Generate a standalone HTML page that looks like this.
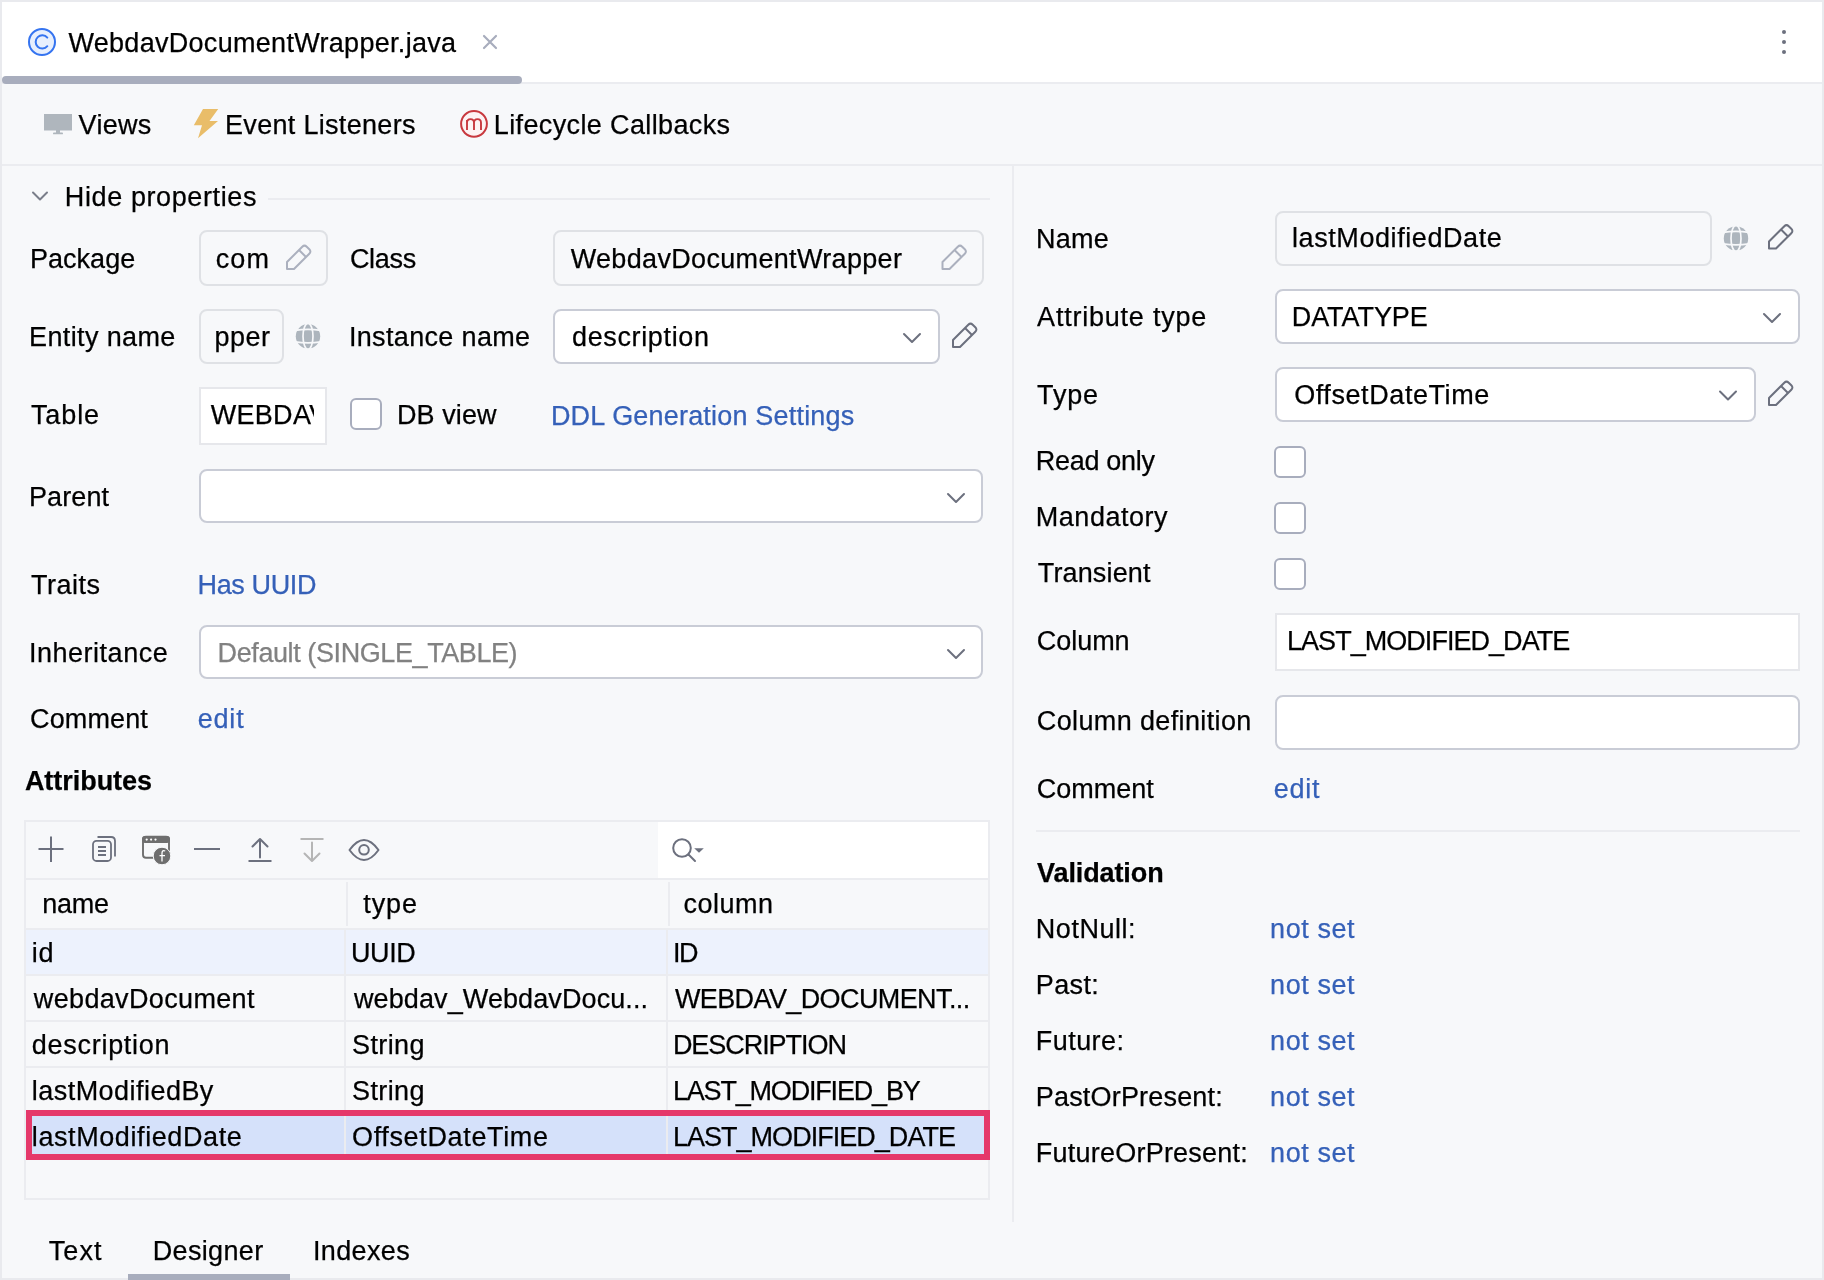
<!DOCTYPE html>
<html><head><meta charset="utf-8"><style>
html,body{margin:0;padding:0;}
body{width:1824px;height:1280px;position:relative;overflow:hidden;background:#f7f8fa;font-family:"Liberation Sans",sans-serif;font-size:27px;color:#000000;}
.r{position:absolute;box-sizing:border-box;}
.t{position:absolute;white-space:pre;line-height:30px;-webkit-text-stroke:0.25px currentColor;}
svg{position:absolute;left:0;top:0;}
</style></head><body>
<div class="r" style="left:0px;top:0px;width:1824px;height:2px;background:#e9eaee;"></div>
<div class="r" style="left:0px;top:0px;width:2px;height:1280px;background:#e9eaee;"></div>
<div class="r" style="left:1822px;top:0px;width:2px;height:1280px;background:#e9eaee;"></div>
<div class="r" style="left:0px;top:1278px;width:1824px;height:2px;background:#e9eaee;"></div>
<div class="r" style="left:2px;top:2px;width:1820px;height:80px;background:#ffffff;"></div>
<div class="r" style="left:2px;top:82px;width:1820px;height:2px;background:#ebecf0;"></div>
<div class="r" style="left:2px;top:76px;width:520px;height:8px;background:#a8adbd;border-radius:4px;"></div>
<div class="r" style="left:2px;top:164px;width:1820px;height:2px;background:#ebecf0;"></div>
<div class="r" style="left:1012px;top:166px;width:2px;height:1056px;background:#ebecf0;"></div>
<div class="r" style="left:268px;top:198px;width:722px;height:2px;background:#ebecf0;"></div>
<div class="r" style="left:198.5px;top:230px;width:129.0px;height:55.5px;border:2px solid #dfe1e5;border-radius:8px;"></div>
<div class="r" style="left:552.5px;top:230px;width:431.0px;height:55.5px;border:2px solid #dfe1e5;border-radius:8px;"></div>
<div class="r" style="left:198.5px;top:308.5px;width:85.0px;height:55.0px;border:2px solid #dfe1e5;border-radius:8px;"></div>
<div class="r" style="left:552.5px;top:308.5px;width:387.0px;height:55.0px;background:#fff;border:2px solid #c9ccd6;border-radius:8px;"></div>
<div class="r" style="left:198.5px;top:386.5px;width:128.5px;height:58.0px;background:#fff;border:2px solid #e6e7eb;"></div>
<div class="r" style="left:350px;top:398px;width:32px;height:32px;background:#fff;border:2px solid #a8adbd;border-radius:6px;"></div>
<div class="r" style="left:198.5px;top:468.5px;width:784.5px;height:54.0px;background:#fff;border:2px solid #c9ccd6;border-radius:8px;"></div>
<div class="r" style="left:198.5px;top:624.5px;width:784.5px;height:54.5px;background:#fff;border:2px solid #c9ccd6;border-radius:8px;"></div>
<div class="r" style="left:24px;top:820px;width:966px;height:380px;border:2px solid #ebecf0;"></div>
<div class="r" style="left:658px;top:822px;width:330px;height:56px;background:#fff;"></div>
<div class="r" style="left:26px;top:878px;width:962px;height:2px;background:#ebecf0;"></div>
<div class="r" style="left:26px;top:928px;width:962px;height:2px;background:#ebecf0;"></div>
<div class="r" style="left:346px;top:882px;width:2px;height:44px;background:#ebecf0;"></div>
<div class="r" style="left:668px;top:882px;width:2px;height:44px;background:#ebecf0;"></div>
<div class="r" style="left:26px;top:930px;width:962px;height:44px;background:#edf2fd;"></div>
<div class="r" style="left:26px;top:974px;width:962px;height:2px;background:#ebecf0;"></div>
<div class="r" style="left:26px;top:1020px;width:962px;height:2px;background:#ebecf0;"></div>
<div class="r" style="left:26px;top:1066px;width:962px;height:2px;background:#ebecf0;"></div>
<div class="r" style="left:26px;top:1112px;width:962px;height:2px;background:#ebecf0;"></div>
<div class="r" style="left:26px;top:1114px;width:962px;height:44px;background:#d5e1fa;"></div>
<div class="r" style="left:344px;top:930px;width:2px;height:228px;background:#ebecf0;"></div>
<div class="r" style="left:666px;top:930px;width:2px;height:228px;background:#ebecf0;"></div>
<div class="r" style="left:26px;top:1110px;width:964px;height:50px;border:6px solid #e5386a;"></div>
<div class="r" style="left:1274.5px;top:210.5px;width:437.0px;height:55.0px;border:2px solid #dfe1e5;border-radius:8px;"></div>
<div class="r" style="left:1274.5px;top:288.5px;width:525.0px;height:55.0px;background:#fff;border:2px solid #c9ccd6;border-radius:8px;"></div>
<div class="r" style="left:1274.5px;top:366.5px;width:481.0px;height:55.0px;background:#fff;border:2px solid #c9ccd6;border-radius:8px;"></div>
<div class="r" style="left:1274px;top:446px;width:32px;height:32px;background:#fff;border:2px solid #a8adbd;border-radius:6px;"></div>
<div class="r" style="left:1274px;top:502px;width:32px;height:32px;background:#fff;border:2px solid #a8adbd;border-radius:6px;"></div>
<div class="r" style="left:1274px;top:558px;width:32px;height:32px;background:#fff;border:2px solid #a8adbd;border-radius:6px;"></div>
<div class="r" style="left:1274.5px;top:612.5px;width:525.0px;height:58.5px;background:#fff;border:2px solid #e6e7eb;"></div>
<div class="r" style="left:1274.5px;top:694.5px;width:525.0px;height:55.0px;background:#fff;border:2px solid #c9ccd6;border-radius:8px;"></div>
<div class="r" style="left:1036px;top:830px;width:764px;height:2px;background:#ebecf0;"></div>
<div class="r" style="left:128px;top:1274px;width:162px;height:6px;background:#a8adbd;"></div>
<svg width="1824" height="1280" viewBox="0 0 1824 1280">
<circle cx="42" cy="42" r="13" fill="#e7effd" stroke="#3574f0" stroke-width="2"/>
<path d="M47.3,37.6 A6.6,6.6 0 1 0 47.3,46.2" fill="none" stroke="#3574f0" stroke-width="2" stroke-linecap="round"/>
<path d="M484,36 L496,48 M496,36 L484,48" stroke="#a8adbd" stroke-width="2.2" stroke-linecap="round"/>
<circle cx="1784" cy="32" r="2" fill="#6c707e"/>
<circle cx="1784" cy="42" r="2" fill="#6c707e"/>
<circle cx="1784" cy="52" r="2" fill="#6c707e"/>
<rect x="44" y="114" width="28" height="16.5" fill="#afb6bd"/><rect x="56" y="130" width="4" height="3" fill="#afb6bd"/><rect x="53" y="132.5" width="10" height="1.8" rx="0.9" fill="#afb6bd"/>
<polygon points="203,109 218.2,109 209.5,121 218,121 198,138.2 202,125.3 193.8,125.3" fill="#e9bd69"/>
<circle cx="474" cy="123.8" r="12.9" fill="#fdf3f4" stroke="#c8393f" stroke-width="2"/>
<path d="M467,130 V120 M467,122.8 Q467,119.1 470.5,119.1 Q474,119.1 474,122.8 V130 M474,122.8 Q474,119.1 477.5,119.1 Q481,119.1 481,122.8 V130" fill="none" stroke="#c8393f" stroke-width="1.9"/>
<polyline points="33,192.5 40.0,199.5 47,192.5" fill="none" stroke="#7a7e8a" stroke-width="2" stroke-linecap="round" stroke-linejoin="round"/>
<g transform="translate(284,242.5)" fill="none" stroke="#abb0be" stroke-width="2" stroke-linejoin="round"><path d="M3,19.5 L18.3,4.2 Q20.5,2 22.7,4.2 L25.3,6.8 Q27.5,9 25.3,11.2 L10,26.5 L3,26.5 Z"/><path d="M15,7.5 L22,14.5"/></g>
<g transform="translate(939.5,242.5)" fill="none" stroke="#abb0be" stroke-width="2" stroke-linejoin="round"><path d="M3,19.5 L18.3,4.2 Q20.5,2 22.7,4.2 L25.3,6.8 Q27.5,9 25.3,11.2 L10,26.5 L3,26.5 Z"/><path d="M15,7.5 L22,14.5"/></g>
<g transform="translate(950,320.5)" fill="none" stroke="#6c707e" stroke-width="2" stroke-linejoin="round"><path d="M3,19.5 L18.3,4.2 Q20.5,2 22.7,4.2 L25.3,6.8 Q27.5,9 25.3,11.2 L10,26.5 L3,26.5 Z"/><path d="M15,7.5 L22,14.5"/></g>
<g transform="translate(1766,222)" fill="none" stroke="#6c707e" stroke-width="2" stroke-linejoin="round"><path d="M3,19.5 L18.3,4.2 Q20.5,2 22.7,4.2 L25.3,6.8 Q27.5,9 25.3,11.2 L10,26.5 L3,26.5 Z"/><path d="M15,7.5 L22,14.5"/></g>
<g transform="translate(1766,378.5)" fill="none" stroke="#6c707e" stroke-width="2" stroke-linejoin="round"><path d="M3,19.5 L18.3,4.2 Q20.5,2 22.7,4.2 L25.3,6.8 Q27.5,9 25.3,11.2 L10,26.5 L3,26.5 Z"/><path d="M15,7.5 L22,14.5"/></g>
<g><circle cx="308" cy="336.3" r="12.2" fill="#adb5bd"/><g fill="none" stroke="#f7f8fa" stroke-width="1.7"><path d="M295,330.3 Q308,328.3 321,330.3"/><path d="M295,341.8 Q308,343.8 321,341.8"/><ellipse cx="308" cy="336.3" rx="5" ry="13"/></g></g>
<g><circle cx="1736" cy="238.4" r="12.2" fill="#adb5bd"/><g fill="none" stroke="#f7f8fa" stroke-width="1.7"><path d="M1723,232.4 Q1736,230.4 1749,232.4"/><path d="M1723,243.9 Q1736,245.9 1749,243.9"/><ellipse cx="1736" cy="238.4" rx="5" ry="13"/></g></g>
<polyline points="904,334 912.0,342 920,334" fill="none" stroke="#6c707e" stroke-width="2" stroke-linecap="round" stroke-linejoin="round"/>
<polyline points="948,494 956.0,502 964,494" fill="none" stroke="#6c707e" stroke-width="2" stroke-linecap="round" stroke-linejoin="round"/>
<polyline points="948,650 956.0,658 964,650" fill="none" stroke="#6c707e" stroke-width="2" stroke-linecap="round" stroke-linejoin="round"/>
<polyline points="1764,314 1772.0,322 1780,314" fill="none" stroke="#6c707e" stroke-width="2" stroke-linecap="round" stroke-linejoin="round"/>
<polyline points="1720,391.5 1728.0,399.5 1736,391.5" fill="none" stroke="#6c707e" stroke-width="2" stroke-linecap="round" stroke-linejoin="round"/>
<path d="M51,836.5 V862 M38.5,849 H63.5" stroke="#6c707e" stroke-width="2"/>
<g fill="none" stroke="#6c707e" stroke-width="1.8"><rect x="93" y="840.8" width="18" height="20.2" rx="3.5"/><path d="M97.5,837 H111 Q115,837 115,841 V856.5"/><path d="M98,847 H106 M98,851 H106 M98,855 H106" stroke-width="1.8"/></g>
<g><rect x="143" y="836.8" width="26" height="21" rx="3" fill="none" stroke="#6e6e6e" stroke-width="1.9"/><rect x="142" y="836" width="28" height="7" rx="3" fill="#6e6e6e"/><circle cx="146.7" cy="839.6" r="1.1" fill="#fff"/><circle cx="151.1" cy="839.6" r="1.1" fill="#fff"/><circle cx="155.5" cy="839.6" r="1.1" fill="#fff"/><circle cx="162" cy="856" r="8.8" fill="#6e6e6e" stroke="#f7f8fa" stroke-width="1"/><path d="M165.2,851 Q162.2,849.8 162,853 V861.5 M159.5,855.6 H165" fill="none" stroke="#fff" stroke-width="1.3"/></g>
<path d="M194,849 H220" stroke="#6c707e" stroke-width="2"/>
<g fill="none" stroke="#6c707e" stroke-width="2" stroke-linecap="round" stroke-linejoin="round"><path d="M260,857.5 V839.5 M252.5,846.5 L260,839 L267.5,846.5"/><path d="M248.5,861 H271.5" stroke-linecap="butt"/></g>
<g fill="none" stroke="#b5b5b5" stroke-width="2" stroke-linecap="round" stroke-linejoin="round"><path d="M312,842.5 V860.5 M304.5,853.5 L312,861 L319.5,853.5"/><path d="M300.5,839 H323.5" stroke-linecap="butt"/></g>
<g fill="none" stroke="#6c707e" stroke-width="2"><path d="M349.5,850 Q364,830 378.5,850 Q364,870 349.5,850 Z" stroke-linejoin="round"/><circle cx="364" cy="849.8" r="4.8"/></g>
<g><circle cx="682" cy="848" r="8.8" fill="none" stroke="#6c707e" stroke-width="2"/><path d="M688.5,854.5 L695,861" stroke="#6c707e" stroke-width="2" stroke-linecap="round"/><polygon points="694.2,848.2 703.8,848.2 699,852.8" fill="#6c707e"/></g>
</svg>

<div style="position:absolute;left:0;top:0;width:1824px;height:1280px;will-change:transform">
<div style="position:absolute;left:198px;top:386px;width:116px;height:58px;overflow:hidden">
<span class="t" style="left:12.7px;top:14px;letter-spacing:0.3px">WEBDAV_DOCUMENT_WRAPPER</span></div>
<span class="t" style="left:68.4px;top:28.0px;letter-spacing:0.30px;">WebdavDocumentWrapper.java</span>
<span class="t" style="left:78.6px;top:110.0px;letter-spacing:0.27px;">Views</span>
<span class="t" style="left:225.0px;top:110.0px;letter-spacing:0.31px;">Event Listeners</span>
<span class="t" style="left:493.8px;top:110.0px;letter-spacing:0.37px;">Lifecycle Callbacks</span>
<span class="t" style="left:64.8px;top:182.0px;letter-spacing:0.61px;">Hide properties</span>
<span class="t" style="left:29.9px;top:244.0px;letter-spacing:0.04px;">Package</span>
<span class="t" style="left:215.8px;top:244.0px;letter-spacing:1.04px;">com</span>
<span class="t" style="left:349.9px;top:244.0px;letter-spacing:-0.28px;">Class</span>
<span class="t" style="left:570.7px;top:244.0px;letter-spacing:0.33px;">WebdavDocumentWrapper</span>
<span class="t" style="left:29.0px;top:322.0px;letter-spacing:0.38px;">Entity name</span>
<span class="t" style="left:214.6px;top:322.0px;letter-spacing:0.45px;">pper</span>
<span class="t" style="left:348.9px;top:322.0px;letter-spacing:0.34px;">Instance name</span>
<span class="t" style="left:572.0px;top:322.0px;letter-spacing:0.64px;">description</span>
<span class="t" style="left:31.0px;top:400.0px;letter-spacing:0.87px;">Table</span>
<span class="t" style="left:397.0px;top:400.0px;letter-spacing:0.08px;">DB view</span>
<span class="t" style="left:550.9px;top:400.5px;color:#3560b8;letter-spacing:0.19px;">DDL Generation Settings</span>
<span class="t" style="left:29.0px;top:482.0px;letter-spacing:0.11px;">Parent</span>
<span class="t" style="left:31.0px;top:570.0px;letter-spacing:0.50px;">Traits</span>
<span class="t" style="left:197.5px;top:570.0px;color:#3560b8;letter-spacing:-0.36px;">Has UUID</span>
<span class="t" style="left:29.0px;top:638.0px;letter-spacing:0.51px;">Inheritance</span>
<span class="t" style="left:217.6px;top:638.0px;color:#818181;letter-spacing:-0.41px;">Default (SINGLE_TABLE)</span>
<span class="t" style="left:30.0px;top:704.0px;letter-spacing:0.13px;">Comment</span>
<span class="t" style="left:197.7px;top:704.0px;color:#3560b8;letter-spacing:0.82px;">edit</span>
<span class="t" style="left:24.9px;top:766.0px;font-weight:700;letter-spacing:-0.04px;">Attributes</span>
<span class="t" style="left:42.3px;top:889.0px;letter-spacing:-0.27px;">name</span>
<span class="t" style="left:363.3px;top:889.0px;letter-spacing:0.89px;">type</span>
<span class="t" style="left:683.5px;top:889.0px;letter-spacing:0.50px;">column</span>
<span class="t" style="left:31.8px;top:937.5px;letter-spacing:0.80px;">id</span>
<span class="t" style="left:351.0px;top:937.5px;letter-spacing:-0.40px;">UUID</span>
<span class="t" style="left:672.9px;top:937.5px;letter-spacing:-1.40px;">ID</span>
<span class="t" style="left:33.8px;top:983.5px;letter-spacing:0.35px;">webdavDocument</span>
<span class="t" style="left:354.0px;top:983.5px;letter-spacing:0.10px;">webdav_WebdavDocu...</span>
<span class="t" style="left:674.9px;top:983.5px;letter-spacing:-0.60px;">WEBDAV_DOCUMENT...</span>
<span class="t" style="left:31.8px;top:1029.5px;letter-spacing:0.72px;">description</span>
<span class="t" style="left:352.0px;top:1029.5px;letter-spacing:0.40px;">String</span>
<span class="t" style="left:672.9px;top:1029.5px;letter-spacing:-1.05px;">DESCRIPTION</span>
<span class="t" style="left:31.8px;top:1075.5px;letter-spacing:0.46px;">lastModifiedBy</span>
<span class="t" style="left:352.0px;top:1075.5px;letter-spacing:0.40px;">String</span>
<span class="t" style="left:672.9px;top:1075.5px;letter-spacing:-1.18px;">LAST_MODIFIED_BY</span>
<span class="t" style="left:31.8px;top:1121.5px;letter-spacing:0.59px;">lastModifiedDate</span>
<span class="t" style="left:352.0px;top:1121.5px;letter-spacing:0.65px;">OffsetDateTime</span>
<span class="t" style="left:672.9px;top:1121.5px;letter-spacing:-0.97px;">LAST_MODIFIED_DATE</span>
<span class="t" style="left:1035.9px;top:224.0px;letter-spacing:0.30px;">Name</span>
<span class="t" style="left:1292.0px;top:223.0px;letter-spacing:0.58px;">lastModifiedDate</span>
<span class="t" style="left:1037.1px;top:302.0px;letter-spacing:0.78px;">Attribute type</span>
<span class="t" style="left:1291.7px;top:302.0px;letter-spacing:-0.06px;">DATATYPE</span>
<span class="t" style="left:1037.1px;top:380.0px;letter-spacing:0.79px;">Type</span>
<span class="t" style="left:1294.2px;top:380.0px;letter-spacing:0.58px;">OffsetDateTime</span>
<span class="t" style="left:1035.8px;top:446.0px;letter-spacing:-0.30px;">Read only</span>
<span class="t" style="left:1035.8px;top:502.0px;letter-spacing:0.52px;">Mandatory</span>
<span class="t" style="left:1037.8px;top:558.0px;letter-spacing:0.14px;">Transient</span>
<span class="t" style="left:1036.8px;top:626.0px;letter-spacing:-0.04px;">Column</span>
<span class="t" style="left:1287.0px;top:626.0px;letter-spacing:-0.96px;">LAST_MODIFIED_DATE</span>
<span class="t" style="left:1036.8px;top:706.0px;letter-spacing:0.37px;">Column definition</span>
<span class="t" style="left:1036.8px;top:774.0px;letter-spacing:-0.02px;">Comment</span>
<span class="t" style="left:1273.8px;top:774.0px;color:#3560b8;letter-spacing:0.72px;">edit</span>
<span class="t" style="left:1037.1px;top:857.5px;font-weight:700;letter-spacing:-0.11px;">Validation</span>
<span class="t" style="left:1035.8px;top:914.4px;letter-spacing:0.54px;">NotNull:</span>
<span class="t" style="left:1270.1px;top:914.4px;color:#3560b8;letter-spacing:0.57px;">not set</span>
<span class="t" style="left:1035.8px;top:970.3px;letter-spacing:0.37px;">Past:</span>
<span class="t" style="left:1270.1px;top:970.3px;color:#3560b8;letter-spacing:0.57px;">not set</span>
<span class="t" style="left:1035.8px;top:1026.2px;letter-spacing:0.44px;">Future:</span>
<span class="t" style="left:1270.1px;top:1026.2px;color:#3560b8;letter-spacing:0.57px;">not set</span>
<span class="t" style="left:1035.8px;top:1082.1px;letter-spacing:0.18px;">PastOrPresent:</span>
<span class="t" style="left:1270.1px;top:1082.1px;color:#3560b8;letter-spacing:0.57px;">not set</span>
<span class="t" style="left:1035.8px;top:1138.1px;letter-spacing:0.23px;">FutureOrPresent:</span>
<span class="t" style="left:1270.1px;top:1138.1px;color:#3560b8;letter-spacing:0.57px;">not set</span>
<span class="t" style="left:48.7px;top:1236.0px;letter-spacing:1.13px;">Text</span>
<span class="t" style="left:152.7px;top:1236.0px;letter-spacing:0.35px;">Designer</span>
<span class="t" style="left:313.0px;top:1236.0px;letter-spacing:0.36px;">Indexes</span>
</div>
</body></html>
